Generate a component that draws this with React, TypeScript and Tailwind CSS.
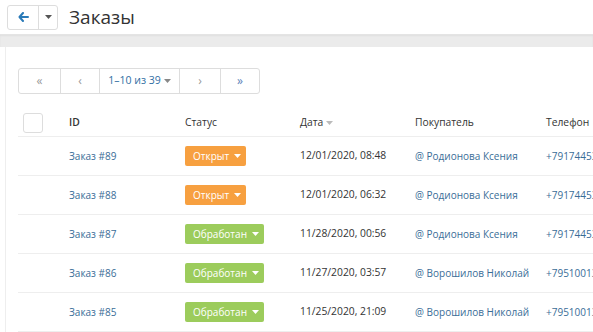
import React from "react";

const rows = [
  { id: "Заказ #89", status: "Открыт", date: "12/01/2020, 08:48", buyer: "Родионова Ксения", phone: "+79174453" },
  { id: "Заказ #88", status: "Открыт", date: "12/01/2020, 06:32", buyer: "Родионова Ксения", phone: "+79174453" },
  { id: "Заказ #87", status: "Обработан", date: "11/28/2020, 00:56", buyer: "Родионова Ксения", phone: "+79174453" },
  { id: "Заказ #86", status: "Обработан", date: "11/27/2020, 03:57", buyer: "Ворошилов Николай", phone: "+79510013" },
  { id: "Заказ #85", status: "Обработан", date: "11/25/2020, 21:09", buyer: "Ворошилов Николай", phone: "+79510013" },
];

const Caret = ({ cls }: { cls: string }) => (
  <svg width="7" height="4" viewBox="0 0 7 4" className={`shrink-0 ${cls}`}>
    <path d="M0 0h7L3.5 4z" fill="currentColor" />
  </svg>
);

export default function App() {
  return (
    <div className="w-[593px] h-[332px] overflow-hidden bg-white text-[10px] text-[#333]" style={{ fontFamily: '"Open Sans", sans-serif' }}>
      <div className="h-[34px] flex items-center pl-[7px] bg-white">
        <div className="flex h-[25px] border border-[#ddd] rounded-[3px]">
          <div className="w-[31px] flex items-center justify-center border-r border-[#ddd]">
            <svg width="11" height="10" viewBox="0 0 11 10">
              <path d="M5 1L1.5 5 5 9M1.5 5H10" stroke="#2a7ab8" strokeWidth="2" fill="none" strokeLinecap="round" strokeLinejoin="round" />
            </svg>
          </div>
          <div className="w-[18px] flex items-center justify-center">
            <Caret cls="text-[#555]" />
          </div>
        </div>
        <div className="ml-[11px] text-[19px] text-[#333] leading-none">Заказы</div>
      </div>
      <div className="h-[13px] bg-[#ebebeb] border-t border-[#e4e4e4] shadow-[inset_0_1px_2px_rgba(0,0,0,0.05)]" />
      <div className="ml-[5px] border-l border-[#eee] pt-[21px]">
        <div className="ml-[12px] flex h-[26px] w-[242px] border border-[#ddd] rounded-[3px] text-[#999]">
          <div className="w-[42px] flex items-center justify-center border-r border-[#ddd] text-[12px]">«</div>
          <div className="w-[39px] flex items-center justify-center border-r border-[#ddd] text-[12px]">‹</div>
          <div className="w-[80px] flex items-center justify-center border-r border-[#ddd] text-[#2f6ea3] text-[10.5px] gap-[3px] whitespace-nowrap">
            1–10 из 39 <Caret cls="text-[#888]" />
          </div>
          <div className="w-[41px] flex items-center justify-center border-r border-[#ddd] text-[12px]">›</div>
          <div className="flex-1 flex items-center justify-center text-[12px] text-[#5a82b8]">»</div>
        </div>
        <div className="ml-[12px] mt-[15px]">
          <div className="h-[28px] flex items-center border-b border-[#eee] text-[#333] text-[10.3px]">
            <div className="w-[51px] shrink-0 pl-[5px] flex items-center">
              <div className="w-[20px] h-[20px] border border-[#ddd] rounded-[3px]" />
            </div>
            <div className="w-[116px] shrink-0 font-semibold">ID</div>
            <div className="w-[115px] shrink-0">Статус</div>
            <div className="w-[115px] shrink-0 flex items-center gap-[3px]">Дата <Caret cls="text-[#bbb]" /></div>
            <div className="w-[131px] shrink-0">Покупатель</div>
            <div className="shrink-0 whitespace-nowrap">Телефон</div>
          </div>
          {rows.map((r) => (
            <div key={r.id} className="h-[39px] flex items-center border-b border-[#eee]">
              <div className="w-[51px] shrink-0" />
              <div className="w-[116px] shrink-0 text-[#3a6d97]">{r.id}</div>
              <div className="w-[115px] shrink-0">
                <span className={`inline-flex items-center gap-[5px] h-[20px] pl-[8px] rounded-[2px] text-white text-[10px] whitespace-nowrap ${r.status === "Открыт" ? "bg-[#f7a040] w-[61px]" : "bg-[#9ccc5c] w-[79px]"}`}>
                  {r.status}
                  <Caret cls="text-white" />
                </span>
              </div>
              <div className="w-[115px] shrink-0 text-[#333] text-[10.3px] whitespace-nowrap">{r.date}</div>
              <div className="w-[131px] shrink-0 text-[#3a6d97] whitespace-nowrap">@ {r.buyer}</div>
              <div className="shrink-0 text-[#3a6d97] whitespace-nowrap">{r.phone}</div>
            </div>
          ))}
        </div>
      </div>
    </div>
  );
}
